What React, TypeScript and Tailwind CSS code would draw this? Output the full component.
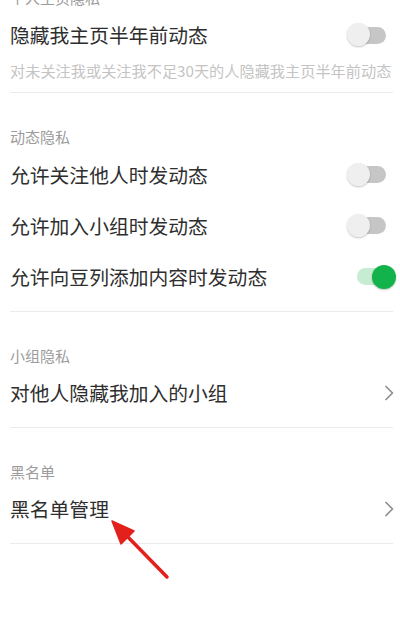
import React from "react";

const font = { fontFamily: '"Noto Sans CJK SC", "Noto Sans", sans-serif' };

function Toggle({ on }: { on: boolean }) {
  if (on) {
    return (
      <div className="relative w-[52px] h-[24px] shrink-0">
        <div className="absolute left-[12px] top-[3.5px] w-[34px] h-[17px] rounded-full bg-[#c6ecd1]" />
        <div className="absolute left-[27px] top-0 w-[24px] h-[24px] rounded-full bg-[#12b34a] shadow-[0_1px_2px_rgba(0,0,0,0.25)]" />
      </div>
    );
  }
  return (
    <div className="relative w-[52px] h-[24px] shrink-0">
      <div className="absolute left-[8px] top-[3.5px] w-[33px] h-[17px] rounded-full bg-[#c6c6c6]" />
      <div className="absolute left-[2px] top-0 w-[23px] h-[23px] rounded-full bg-[#efefef] shadow-[0_1px_2px_rgba(0,0,0,0.22)]" />
    </div>
  );
}

function Chevron() {
  return (
    <svg width="10" height="16" viewBox="0 0 10 16" className="shrink-0 mr-[3px]">
      <path d="M2 1.5 L8.5 8 L2 14.5" fill="none" stroke="#8f8f8f" strokeWidth="1.7" strokeLinecap="round" strokeLinejoin="round" />
    </svg>
  );
}

function Label({ text }: { text: string }) {
  return (
    <div className="pt-[34px] px-[10px] h-[54px] flex items-end">
      <div className="h-[20px] leading-[20px] text-[15px] text-[#9c9c9c]">{text}</div>
    </div>
  );
}

function Row({ text, right }: { text: string; right: React.ReactNode }) {
  return (
    <div className="h-[51px] flex items-center justify-between pl-[10px] pr-[3px]">
      <span className="text-[19.8px] text-[#2e2e2e] leading-none">{text}</span>
      {right}
    </div>
  );
}

function Divider() {
  return <div className="ml-[10px] mr-[7px] h-px bg-[#ebebeb]" />;
}

export default function App() {
  return (
    <div className="relative w-[400px] min-h-[641px] bg-white overflow-hidden" style={font}>
      {/* Section 1 */}
      <div className="mt-[-13px]">
        <div className="h-[22px] px-[10px] flex items-center text-[15px] text-[#9c9c9c]">个人主页隐私</div>
        <div className="h-[52px] flex items-center justify-between pl-[10px] pr-[3px]">
          <span className="text-[19.8px] text-[#2e2e2e] leading-none">隐藏我主页半年前动态</span>
          <Toggle on={false} />
        </div>
        <div className="h-[18px] px-[10px] flex items-center text-[15.2px] text-[#c4c4c4] whitespace-nowrap">
          对未关注我或关注我不足30天的人隐藏我主页半年前动态
        </div>
        <div className="h-[13px]" />
      </div>
      <Divider />

      {/* Section 2 */}
      <Label text="动态隐私" />
      <div className="h-[2px]" />
      <Row text="允许关注他人时发动态" right={<Toggle on={false} />} />
      <Row text="允许加入小组时发动态" right={<Toggle on={false} />} />
      <Row text="允许向豆列添加内容时发动态" right={<Toggle on={true} />} />
      <div className="h-[9px]" />
      <Divider />

      {/* Section 3 */}
      <Label text="小组隐私" />
      <div className="h-[1px]" />
      <Row text="对他人隐藏我加入的小组" right={<Chevron />} />
      <div className="h-[9px]" />
      <Divider />

      {/* Section 4 */}
      <Label text="黑名单" />
      <div className="h-[1px]" />
      <Row text="黑名单管理" right={<Chevron />} />
      <div className="h-[9px]" />
      <Divider />

      {/* Red annotation arrow */}
      <svg className="absolute left-0 top-0 pointer-events-none" width="400" height="641" viewBox="0 0 400 641">
        <line x1="167" y1="577" x2="124" y2="533" stroke="#e3201c" strokeWidth="3.5" strokeLinecap="round" />
        <polygon points="112,521 134,531 121,544" fill="#e3201c" stroke="#e3201c" strokeWidth="1.5" strokeLinejoin="round" />
      </svg>
    </div>
  );
}
